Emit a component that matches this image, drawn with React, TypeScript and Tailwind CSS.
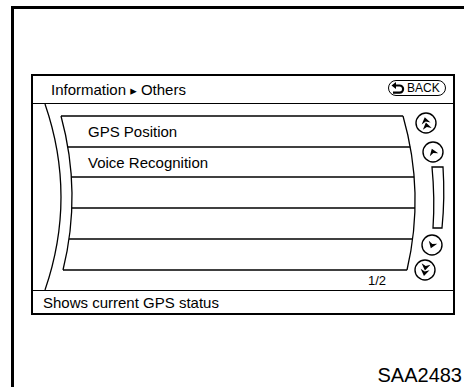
import React from "react";

const rows = ["GPS Position", "Voice Recognition", "", "", ""];
const rowHeights = ["h-[31px]", "h-[30px]", "h-[31px]", "h-[31px]", "h-[31px]"];
const lineYs = [12, 43, 73, 104, 135, 166];

// quadratic curves for the bent list edges (body coordinates)
const leftX = (y: number) => {
  const t = (y - 12) / 154;
  return (1 - t) * (1 - t) * 28 + 2 * t * (1 - t) * 49 + t * t * 30;
};
const rightX = (y: number) => {
  const t = (y - 12) / 154;
  return (1 - t) * (1 - t) * 370 + 2 * t * (1 - t) * 392 + t * t * 374;
};

const Head = ({ y }: { y: number }) => (
  <path d={`M-4.5 ${y + 3} L0 ${y - 3.5} L4.5 ${y + 3} L0 ${y + 1} Z`} />
);

const ScrollButton = ({
  cx,
  cy,
  up,
  double,
  tilt,
}: {
  cx: number;
  cy: number;
  up: boolean;
  double?: boolean;
  tilt: number;
}) => (
  <g>
    <circle cx={cx} cy={cy} r={10} fill="white" stroke="black" strokeWidth={1.4} />
    <g transform={`translate(${cx} ${cy}) rotate(${(up ? 0 : 180) + tilt})`} fill="black">
      {double ? (
        <>
          <Head y={-2.5} />
          <Head y={3} />
        </>
      ) : (
        <Head y={0} />
      )}
    </g>
  </g>
);

const BackIcon = () => (
  <svg width="14" height="13" viewBox="0 0 14 13" className="shrink-0">
    <path d="M0.5 3.5 L5 0 L5 7 Z" fill="black" />
    <path
      d="M4 3.5 H8.5 A3.6 3.6 0 0 1 8.5 10.7 H2"
      fill="none"
      stroke="black"
      strokeWidth={2.2}
    />
  </svg>
);

const ListDrawing = () => (
  <svg
    width="420"
    height="186"
    viewBox="0 0 420 186"
    className="absolute inset-0"
  >
    <g fill="none" stroke="black" strokeWidth={1.3}>
      <path d="M12 0 Q44 93 12 186" />
      <path d="M28 12 Q49 89 30 166" />
      <path d="M370 12 Q392 89 374 166" />
      {lineYs.map((y) => (
        <line key={y} x1={leftX(y)} y1={y} x2={rightX(y)} y2={y} />
      ))}
      <path d="M399 63 L410 63 Q412 94 409 124 L400 124 Q402 94 399 63 Z" />
    </g>
    <ScrollButton cx={393} cy={19} up double tilt={-12} />
    <ScrollButton cx={400} cy={48} up tilt={-20} />
    <ScrollButton cx={399} cy={141} up={false} tilt={20} />
    <ScrollButton cx={392} cy={166} up={false} double tilt={10} />
  </svg>
);

const App = () => {
  return (
    <div
      className="w-[464px] h-[387px] bg-white overflow-hidden text-black"
      style={{ fontFamily: '"Liberation Sans", Arial, sans-serif' }}
    >
      <div className="ml-[11px] mt-[6px] h-[381px] border-l-[3px] border-t-[3px] border-black flex flex-col">
        <div className="ml-[17px] mt-[65px] w-[424px] border-2 border-black flex flex-col">
          <div className="h-[28px] border-b border-black flex items-center justify-between pl-[18px] pr-[7px]">
            <span className="text-[15px] leading-none">
              Information{" "}
              <span
                className="text-[13px]"
                style={{ fontFamily: '"DejaVu Sans", sans-serif' }}
              >
                ▸
              </span>{" "}
              Others
            </span>
            <div className="h-[16px] w-[58px] -mt-[3px] rounded-full border-[1.5px] border-black flex items-center pl-[2px] gap-[2px]">
              <BackIcon />
              <span className="text-[12px] leading-none">BACK</span>
            </div>
          </div>

          <div className="relative h-[186px]">
            <ListDrawing />
            <div className="relative flex flex-col pt-[12px]">
              {rows.map((label, i) => (
                <div
                  key={i}
                  className={`${rowHeights[i]} flex items-center pl-[55px] text-[15px] leading-none`}
                >
                  {label}
                </div>
              ))}
              <div className="h-[20px] flex items-center pl-[335px] text-[13px] leading-none">
                1/2
              </div>
            </div>
          </div>

          <div className="h-[23px] border-t border-black flex items-center pl-[10px] text-[15px] leading-none">
            Shows current GPS status
          </div>
        </div>

        <div className="mt-[50px] w-full text-right pr-[2px] text-[20px] leading-none">
          SAA2483
        </div>
      </div>
    </div>
  );
};

export default App;
